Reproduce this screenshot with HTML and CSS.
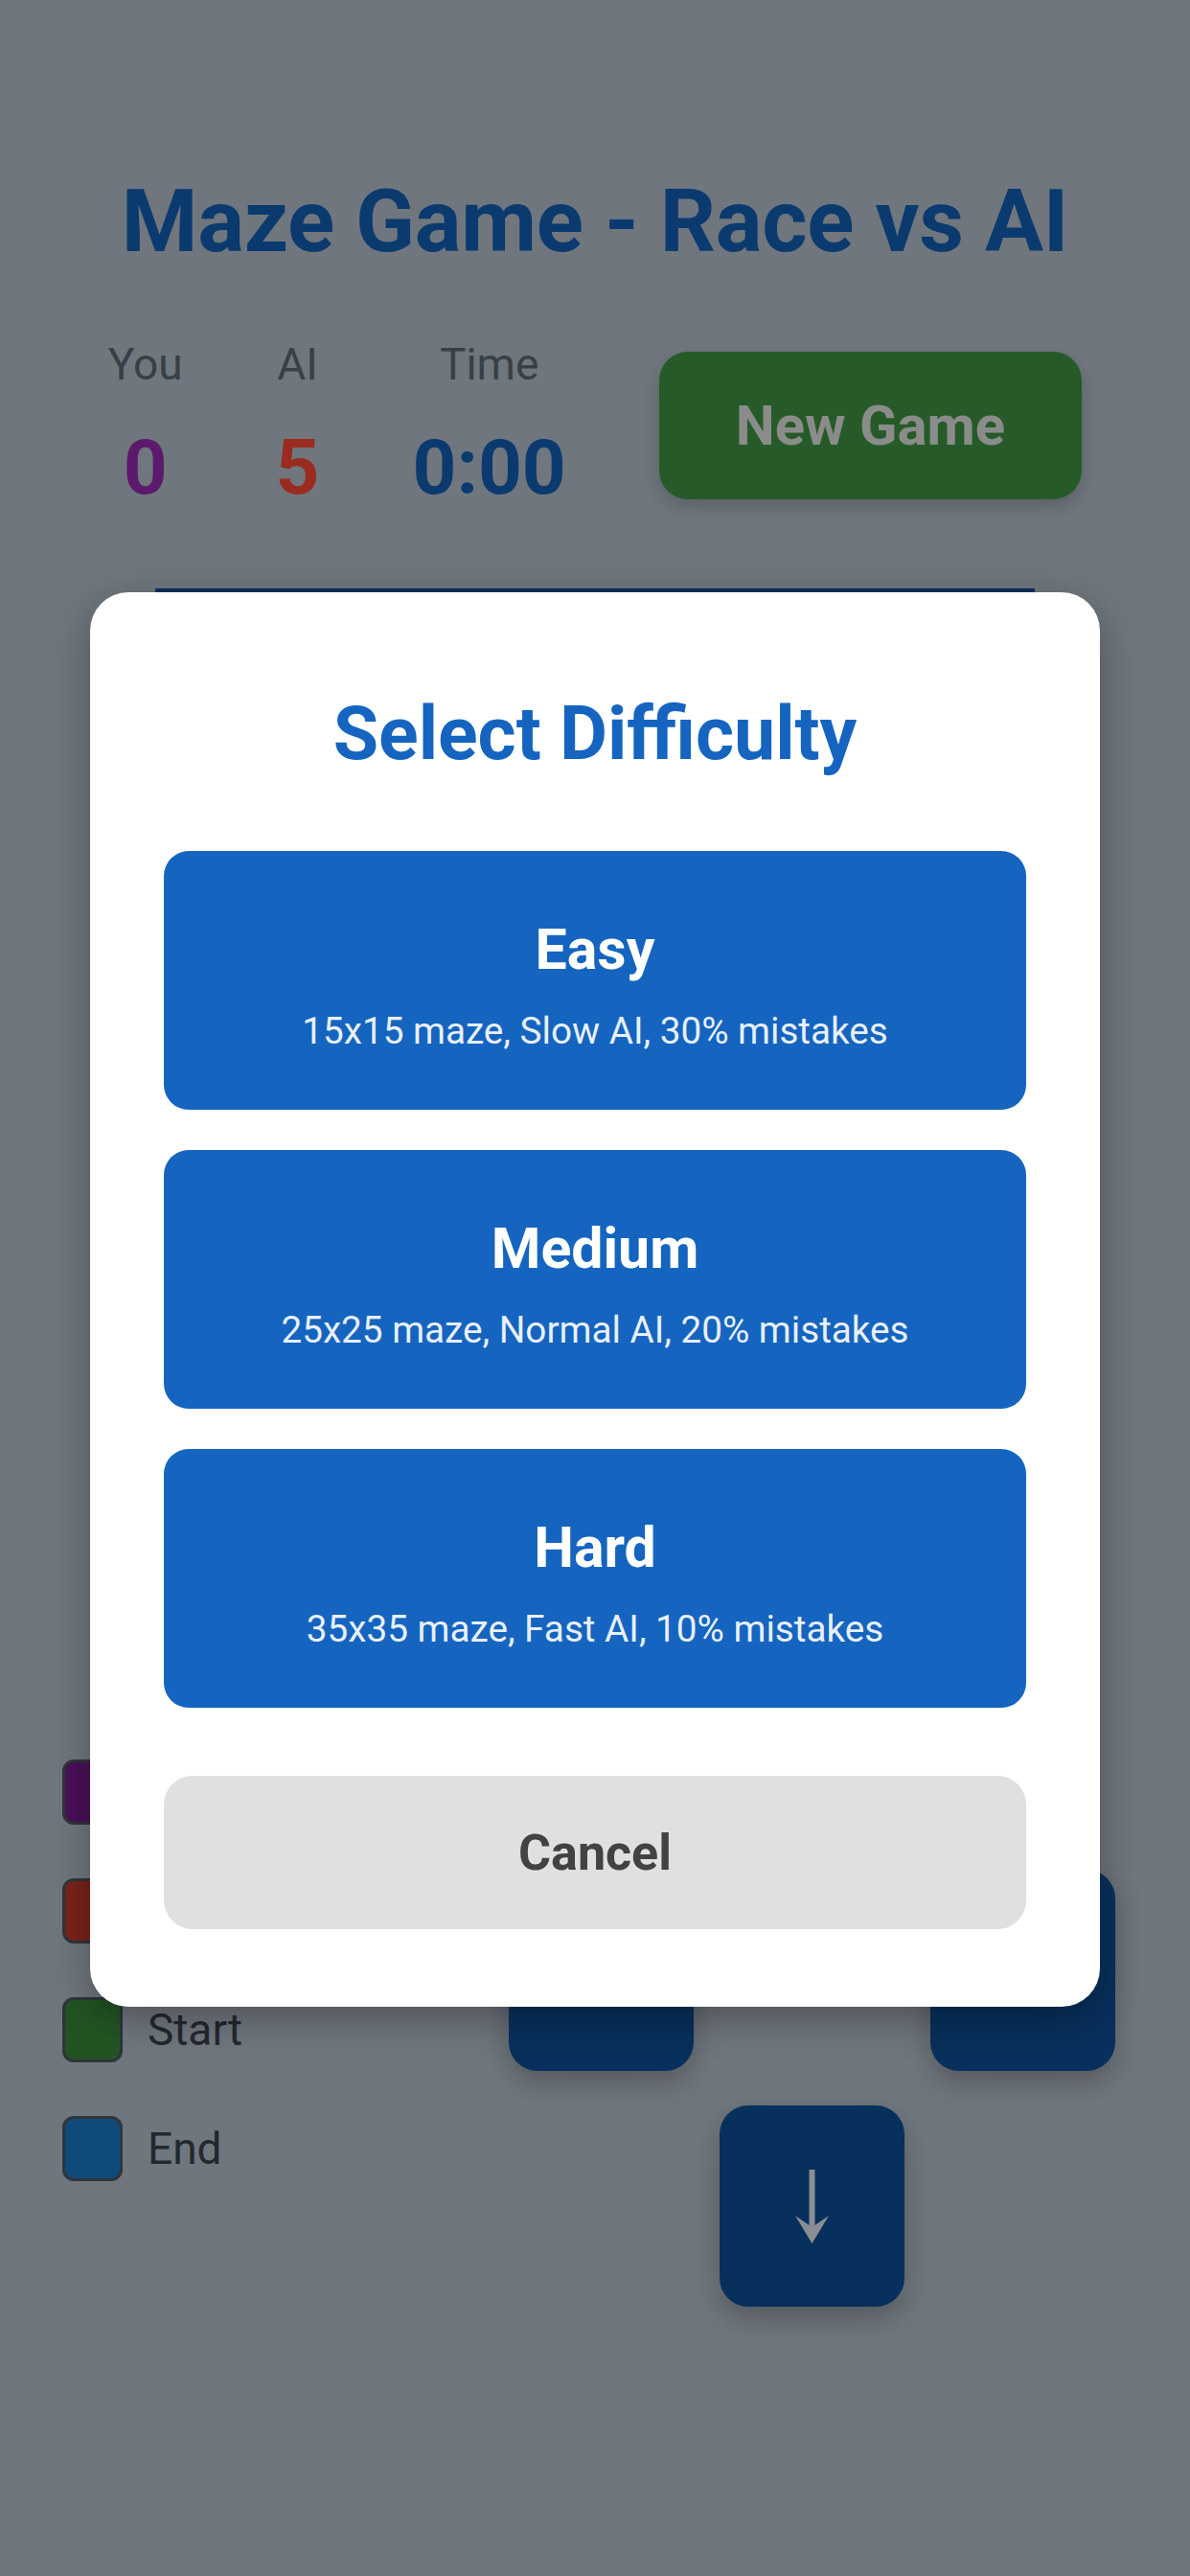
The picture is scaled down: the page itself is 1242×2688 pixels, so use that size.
FILE: index.html
```html
<!DOCTYPE html>
<html lang="en">
<head>
<meta charset="utf-8">
<title>Maze Game - Race vs AI</title>
<link rel="stylesheet" href="styles.css">
</head>
<body>
<div class="page">
  <h1 class="title">Maze Game - Race vs AI</h1>
  <div class="status-row">
    <div class="stat">
      <span class="stat-label">You</span>
      <span class="stat-value you">0</span>
    </div>
    <div class="stat">
      <span class="stat-label">AI</span>
      <span class="stat-value ai">5</span>
    </div>
    <div class="stat">
      <span class="stat-label">Time</span>
      <span class="stat-value time">0:00</span>
    </div>
    <button class="new-game">New Game</button>
  </div>
  <div class="maze"></div>
  <div class="controls">
    <ul class="legend">
      <li class="legend-item"><span class="swatch s-you"></span><span class="legend-text">You</span></li>
      <li class="legend-item"><span class="swatch s-ai"></span><span class="legend-text">AI</span></li>
      <li class="legend-item"><span class="swatch s-start"></span><span class="legend-text">Start</span></li>
      <li class="legend-item"><span class="swatch s-end"></span><span class="legend-text">End</span></li>
    </ul>
    <div class="dpad">
      <button class="pad pad-up"><svg class="arrow" viewBox="0 0 35 77"><rect x="14.5" y="7" width="6" height="70"/><polygon points="0,29 17.5,17 35,29 17.5,0"/></svg></button>
      <button class="pad pad-left"><svg class="arrow-h" viewBox="0 0 77 35"><rect x="7" y="14.5" width="70" height="6"/><polygon points="29,0 17,17.5 29,35 0,17.5"/></svg></button>
      <button class="pad pad-right"><svg class="arrow-h" viewBox="0 0 77 35"><rect x="0" y="14.5" width="70" height="6"/><polygon points="48,0 60,17.5 48,35 77,17.5"/></svg></button>
      <button class="pad pad-down"><svg class="arrow" viewBox="0 0 35 77"><rect x="14.5" y="0" width="6" height="70"/><polygon points="0,48 17.5,60 35,48 17.5,77"/></svg></button>
    </div>
  </div>
</div>

<div class="overlay">
  <div class="modal">
    <h2 class="modal-title">Select Difficulty</h2>
    <div class="options">
      <button class="option">
        <span class="option-name">Easy</span>
        <span class="option-desc">15x15 maze, Slow AI, 30% mistakes</span>
      </button>
      <button class="option">
        <span class="option-name">Medium</span>
        <span class="option-desc">25x25 maze, Normal AI, 20% mistakes</span>
      </button>
      <button class="option">
        <span class="option-name">Hard</span>
        <span class="option-desc">35x35 maze, Fast AI, 10% mistakes</span>
      </button>
    </div>
    <button class="cancel">Cancel</button>
  </div>
</div>
</body>
</html>
```

FILE: styles.css
```css
* { box-sizing: border-box; }

html, body {
  margin: 0;
  padding: 0;
  width: 1242px;
  height: 2688px;
  overflow: hidden;
}

body {
  background: #6f767d;
  font-family: Roboto, "Noto Sans", "Liberation Sans", sans-serif;
  position: relative;
}

button {
  font-family: inherit;
  border: none;
  cursor: pointer;
}

.page {
  padding-top: 186px;
  display: flex;
  flex-direction: column;
  align-items: center;
}

.title {
  margin: 0;
  font-size: 91px;
  line-height: 1;
  font-weight: 700;
  color: #0b3a6f;
  text-align: center;
  letter-spacing: -0.3px;
}

.status-row {
  margin-top: 76px;
  display: flex;
  align-items: center;
  justify-content: center;
  gap: 97px;
}

.stat {
  display: flex;
  flex-direction: column;
  align-items: center;
  gap: 34px;
}

.stat-label {
  font-size: 46px;
  line-height: 54px;
  color: #3a3f45;
}

.stat-value {
  font-size: 80px;
  line-height: 94px;
  font-weight: 700;
}

.stat-value.you { color: #5c1a6d; }
.stat-value.ai { color: #9a2b20; }
.stat-value.time { color: #0b3a6f; }

.new-game {
  height: 154px;
  padding: 0 80px;
  border-radius: 30px;
  background: #265b29;
  color: #8a8c8a;
  font-size: 58px;
  font-weight: 700;
  box-shadow: 0 8px 18px rgba(0, 0, 0, 0.18);
}

.maze {
  margin-top: 79px;
  width: 918px;
  height: 918px;
  border-top: 4px solid #0b2f5c;
  background: #6f767d;
}

.controls {
  margin-top: 173px;
  width: 100%;
  padding: 0 78px 0 65px;
  display: flex;
  align-items: center;
  justify-content: space-between;
}

.legend {
  list-style: none;
  margin: 0;
  padding: 0;
  display: flex;
  flex-direction: column;
  gap: 56px;
}

.legend-item {
  display: flex;
  align-items: center;
  gap: 26px;
}

.swatch {
  width: 63px;
  height: 68px;
  border-radius: 12px;
  border: 3px solid #2f353b;
}

.s-you { background: #4a1059; }
.s-ai { background: #7a2219; }
.s-start { background: #225423; }
.s-end { background: #0f4a7a; }

.legend-text {
  font-size: 46px;
  color: #23282d;
}

.dpad {
  display: grid;
  grid-template-columns: repeat(3, 193px);
  grid-template-rows: repeat(3, 210px);
  column-gap: 27px;
  row-gap: 36px;
}

.pad {
  border-radius: 30px;
  background: #08305c;
  box-shadow: 0 12px 28px rgba(0, 0, 0, 0.24);
  display: flex;
  align-items: center;
  justify-content: center;
  padding: 0;
}

.pad-up { grid-column: 2; grid-row: 1; }
.pad-left { grid-column: 1; grid-row: 2; }
.pad-right { grid-column: 3; grid-row: 2; }
.pad-down { grid-column: 2; grid-row: 3; }

.arrow {
  width: 35px;
  height: 77px;
  fill: #8a8e93;
}

.arrow-h {
  width: 77px;
  height: 35px;
  fill: #8a8e93;
}

/* modal */
.overlay {
  position: absolute;
  inset: 0;
  display: flex;
  justify-content: center;
  align-items: flex-start;
  padding-top: 618px;
}

.modal {
  width: 1054px;
  background: #ffffff;
  border-radius: 40px;
  padding: 101px 77px 81px;
  box-shadow: 0 12px 40px rgba(0, 0, 0, 0.3);
  display: flex;
  flex-direction: column;
}

.modal-title {
  margin: 0;
  font-size: 77px;
  line-height: 94px;
  font-weight: 700;
  color: #1565c0;
  text-align: center;
}

.options {
  margin-top: 75px;
  display: flex;
  flex-direction: column;
  gap: 42px;
}

.option {
  height: 270px;
  border-radius: 26px;
  background: #1565c0;
  color: #ffffff;
  padding: 68px 20px 0;
  display: flex;
  flex-direction: column;
  align-items: center;
}

.option-name {
  font-size: 59px;
  line-height: 70px;
  font-weight: 700;
}

.option-desc {
  margin-top: 26px;
  font-size: 38.7px;
  line-height: 47px;
  color: rgba(255, 255, 255, 0.92);
}

.cancel {
  margin-top: 71px;
  height: 160px;
  border-radius: 30px;
  background: #e0e0e0;
  color: #424242;
  font-size: 52px;
  font-weight: 700;
}
```
